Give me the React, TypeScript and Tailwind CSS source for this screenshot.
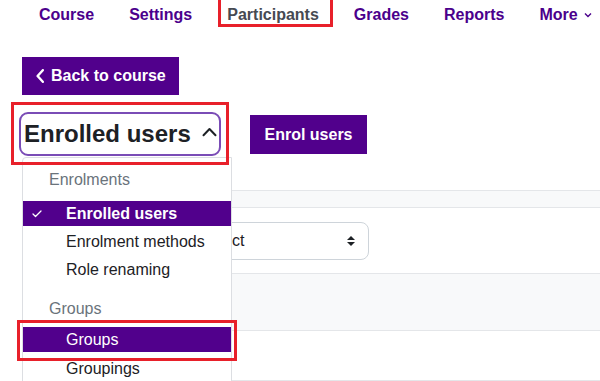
import { Check } from "lucide-react";

const nav = ["Course", "Settings", "Participants", "Grades", "Reports"];

const font = "font-['Liberation_Sans',Arial,sans-serif]";

export default function App() {
  return (
    <div className={`relative h-[381px] w-[600px] overflow-hidden bg-white text-[#1d2125] ${font}`}>
      {/* secondary navigation */}
      <nav className="flex h-[30px] items-center gap-[35px] pl-[39px] text-[16px] font-bold text-[#4b008c]">
        {nav.map((item) =>
          item === "Participants" ? (
            <span key={item} className="relative text-[#464a52]">
              {item}
              <span className="absolute -left-[9px] -right-[14px] -top-[8px] h-[32px] border-[3px] border-[#e8202a]" />
            </span>
          ) : (
            <span key={item}>{item}</span>
          ),
        )}
        <span className="flex items-center gap-[6px]">
          More
          <svg width="8" height="6" viewBox="0 0 8 6" fill="none">
            <path d="M1 1.5 L4 4.5 L7 1.5" stroke="currentColor" strokeWidth="1.4" />
          </svg>
        </span>
      </nav>

      {/* back button */}
      <div className="pl-[22px] pt-[27px]">
        <button className="flex h-[38px] w-[157px] items-center gap-[7px] bg-[#51008c] pl-[14px] text-[16px] font-bold text-white">
          <svg width="8" height="14" viewBox="0 0 8 14" fill="none">
            <path d="M6.8 1.2 L1.6 7 L6.8 12.8" stroke="currentColor" strokeWidth="2.4" strokeLinecap="round" strokeLinejoin="round" />
          </svg>
          Back to course
        </button>
      </div>

      {/* heading row */}
      <div className="mt-[17px] flex items-start">
        <div className="ml-[19px] flex h-[44px] w-[202px] items-center rounded-[9px] border-2 border-[#7a4cb6] pl-[3px]">
          <span className="text-[24px] font-bold leading-none text-[#1d2125]">Enrolled users</span>
          <svg width="15" height="10" viewBox="0 0 15 10" fill="none" className="ml-[11px] mt-[-4px]">
            <path d="M1.5 8.2 L7.5 2 L13.5 8.2" stroke="#1d2125" strokeWidth="2" strokeLinecap="round" strokeLinejoin="round" />
          </svg>
        </div>
        <button className="ml-[29px] mt-[3px] flex h-[39px] w-[117px] items-center justify-center bg-[#51008c] text-[16px] font-bold text-white">
          Enrol users
        </button>
      </div>

      {/* content behind the menu */}
      <div className="ml-[22px] mt-[34px]">
        <div className="h-[18px] border-y border-[#e4e6e9] bg-[#f8f9fa]" />
        <div className="h-[65px] pt-[14px]">
          <div className="ml-[165px] flex h-[38px] w-[182px] items-center justify-between rounded-[8px] border border-[#ced4da] pl-[12px] pr-[12px] text-[16px] text-[#1d2125]">
            Select
            <svg width="10" height="12" viewBox="0 0 10 12" className="text-[#1d2125]">
              <path d="M1 5 L5 1 L9 5 Z M1 7 L5 11 L9 7 Z" fill="currentColor" />
            </svg>
          </div>
        </div>
        <div className="h-[58px] border-y border-[#e4e6e9] bg-[#f8f9fa]" />
        <div className="h-[50px] border-b border-[#e4e6e9]" />
      </div>

      {/* dropdown menu */}
      <div className="absolute left-[22px] top-[157px] h-[240px] w-[210px] rounded-tl-[4px] border border-[#dcdee2] bg-white pt-[8px] text-[16px]">
        <div className="flex h-[28px] items-center pl-[26px] text-[#6a737b]">Enrolments</div>
        <div className="mt-[7px] flex h-[25px] items-center bg-[#51008c] pl-[8px] font-bold text-white">
          <Check className="h-[12px] w-[12px]" strokeWidth={2.5} />
          <span className="ml-[23px]">Enrolled users</span>
        </div>
        <div className="mt-[2px] flex h-[28px] items-center pl-[43px]">Enrolment methods</div>
        <div className="flex h-[28px] items-center pl-[43px]">Role renaming</div>
        <div className="mt-[11px] flex h-[28px] items-center pl-[26px] text-[#6a737b]">Groups</div>
        <div className="mt-[4px] flex h-[25px] items-center bg-[#51008c] pl-[43px] text-white">Groups</div>
        <div className="mt-[3px] flex h-[28px] items-center pl-[43px]">Groupings</div>
      </div>

      {/* annotation boxes */}
      <div className="absolute left-[11px] top-[102px] h-[63px] w-[218px] border-[3px] border-[#e8202a]" />
      <div className="absolute left-[17px] top-[320px] h-[41px] w-[220px] border-[3px] border-[#e8202a]" />
    </div>
  );
}
